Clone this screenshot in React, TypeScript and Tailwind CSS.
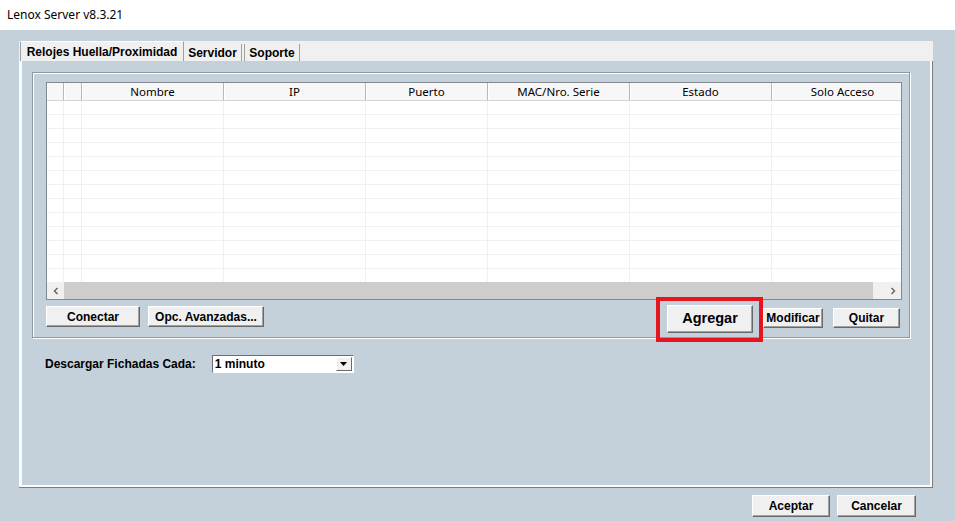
const columns = [
  { label: "", w: "w-[17px]" },
  { label: "", w: "w-[18px]" },
  { label: "Nombre", w: "w-[142px]" },
  { label: "IP", w: "w-[142px]" },
  { label: "Puerto", w: "w-[122px]" },
  { label: "MAC/Nro. Serie", w: "w-[142px]" },
  { label: "Estado", w: "w-[142px]" },
  { label: "Solo Acceso", w: "w-[142px]" },
];

const rows = Array.from({ length: 13 });

function WinButton({ children, className = "" }: { children: React.ReactNode; className?: string }) {
  return (
    <button
      className={
        "flex items-center justify-center border border-t-white border-l-white border-r-[#696969] border-b-[#696969] bg-[#f0f0f0] font-bold text-black shadow-[inset_-1px_-1px_0_#a0a0a0] " +
        className
      }
    >
      {children}
    </button>
  );
}

export default function App() {
  return (
    <div className="flex h-[521px] w-[955px] flex-col overflow-hidden bg-[#c5d1da] font-['Liberation_Sans',sans-serif] text-[12px]">
      {/* Title bar */}
      <div className="flex h-[30px] shrink-0 items-center bg-white pl-[7px] font-['Noto_Sans',sans-serif] text-[12px] text-black">
        Lenox Server v8.3.21
      </div>

      <div className="pl-[19px] pt-[11px]">
        {/* Tab control */}
        <div className="flex h-[447px] w-[914px] flex-col">
          <div className="flex h-[20px] shrink-0 items-end bg-[#f0f0f0] pl-[1px]">
            <div className="flex h-[20px] w-[164px] items-center justify-center border-x border-t border-x-[#a0a0a0] border-t-white bg-[#f0f0f0] font-bold text-black">
              Relojes Huella/Proximidad
            </div>
            <div className="flex h-[17px] w-[58px] items-center justify-center border-r border-[#a0a0a0] font-bold">
              Servidor
            </div>
            <div className="ml-[2px] flex h-[17px] w-[56px] items-center justify-center border-r border-l border-[#a0a0a0] font-bold">
              Soporte
            </div>
            <div className="flex-1" />
          </div>

          {/* Tab page */}
          <div className="flex flex-1 flex-col border-r border-b border-[#7c7c7c]">
            <div className="flex flex-1 flex-col border-l-[3px] border-b-[2px] border-r-[2px] border-white/90 pl-[10px] pt-[11px]">
              {/* Group box */}
              <div className="relative h-[266px] w-[878px] border border-[#8d98a0] pl-[13px] pt-[9px] shadow-[inset_1px_1px_0_#ffffff,1px_1px_0_#ffffff]">
                <div className="flex h-[218px] w-[856px] flex-col border border-[#828790] bg-white">
                  {/* Header */}
                  <div className="flex h-[18px] shrink-0 overflow-hidden border-b border-[#d5d5d5] bg-[#f7f7f7] font-['Noto_Sans',sans-serif] text-[11.5px] font-normal">
                    {columns.map((c, i) => (
                      <div
                        key={i}
                        className={c.w + " flex shrink-0 items-center justify-center border-r border-[#b8b8b8] pt-[1px] leading-none shadow-[inset_1px_0_0_#ffffff]"}
                      >
                        {c.label}
                      </div>
                    ))}
                  </div>
                  {/* Rows */}
                  <div className="flex-1 overflow-hidden">
                    {rows.map((_, r) => (
                      <div key={r} className="flex h-[14px] border-b border-[#f0f0f0]">
                        {columns.map((c, i) => (
                          <div key={i} className={c.w + " shrink-0 border-r border-[#f0f0f0]"} />
                        ))}
                      </div>
                    ))}
                  </div>
                  {/* Horizontal scrollbar */}
                  <div className="flex h-[17px] shrink-0 items-stretch bg-[#f0f0f0] text-[#606060]">
                    <div className="flex w-[17px] items-center justify-center">
                      <svg width="8" height="8" viewBox="0 0 8 8">
                        <path d="M5.5 1 L2.5 4 L5.5 7" fill="none" stroke="#606060" strokeWidth="1.4" />
                      </svg>
                    </div>
                    <div className="w-[809px] bg-[#cdcdcd]" />
                    <div className="flex-1" />
                    <div className="flex w-[17px] items-center justify-center">
                      <svg width="8" height="8" viewBox="0 0 8 8">
                        <path d="M2.5 1 L5.5 4 L2.5 7" fill="none" stroke="#606060" strokeWidth="1.4" />
                      </svg>
                    </div>
                  </div>
                </div>

                {/* Buttons row */}
                <div className="mt-[5px] flex w-[856px] items-start">
                  <WinButton className="mt-[1px] h-[21px] w-[94px]">Conectar</WinButton>
                  <WinButton className="mt-[1px] ml-[8px] h-[21px] w-[116px]">Opc. Avanzadas...</WinButton>
                  <div className="flex-1" />
                  <div className="relative">
                    <WinButton className="h-[28px] w-[86px] text-[14.5px]">Agregar</WinButton>
                    <div className="absolute -top-[8px] -left-[11px] -right-[10px] -bottom-[9px] border-[4px] border-[#e5141f]" />
                  </div>
                  <WinButton className="mt-[3px] ml-[10px] h-[20px] w-[60px]">Modificar</WinButton>
                  <WinButton className="mt-[3px] ml-[10px] h-[20px] w-[67px]">Quitar</WinButton>
                  <div className="w-[2px]" />
                </div>
              </div>

              {/* Download interval */}
              <div className="mt-[17px] flex items-center pl-[13px]">
                <span className="font-bold text-black">Descargar Fichadas Cada:</span>
                <div className="ml-[16px] flex h-[18px] w-[142px] items-center border border-t-[#6d6d6d] border-l-[#6d6d6d] border-r-white border-b-white bg-white pl-[2px] pr-[1px]">
                  <span className="flex-1 font-bold">1 minuto</span>
                  <div className="flex h-[14px] w-[16px] items-center justify-center border border-t-white border-l-white border-r-[#696969] border-b-[#696969] bg-[#f0f0f0]">
                    <svg width="7" height="4" viewBox="0 0 7 4">
                      <path d="M0 0 H7 L3.5 4 Z" fill="#000" />
                    </svg>
                  </div>
                </div>
              </div>
            </div>
          </div>
        </div>
      </div>

      {/* Dialog buttons */}
      <div className="mt-[7px] flex w-[955px] justify-end gap-[7px] pr-[39px]">
        <WinButton className="h-[22px] w-[78px]">Aceptar</WinButton>
        <WinButton className="h-[22px] w-[79px]">Cancelar</WinButton>
      </div>
    </div>
  );
}
